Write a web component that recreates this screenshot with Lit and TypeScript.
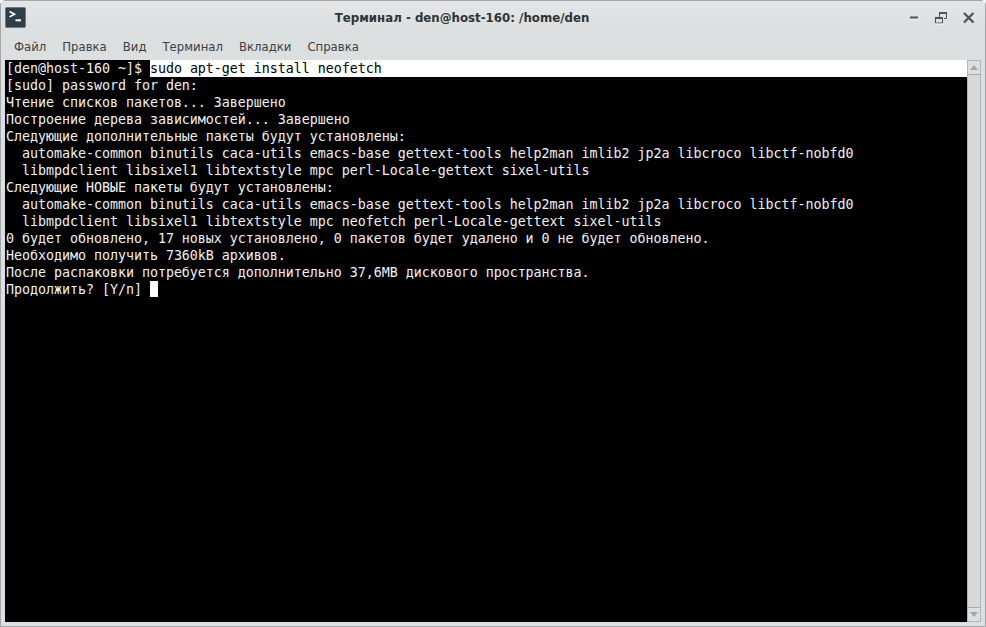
import { LitElement, html, css } from "lit";
import { customElement } from "lit/decorators.js";

const lines = [
  "[sudo] password for den:",
  "Чтение списков пакетов... Завершено",
  "Построение дерева зависимостей... Завершено",
  "Следующие дополнительные пакеты будут установлены:",
  "  automake-common binutils caca-utils emacs-base gettext-tools help2man imlib2 jp2a libcroco libctf-nobfd0",
  "  libmpdclient libsixel1 libtextstyle mpc perl-Locale-gettext sixel-utils",
  "Следующие НОВЫЕ пакеты будут установлены:",
  "  automake-common binutils caca-utils emacs-base gettext-tools help2man imlib2 jp2a libcroco libctf-nobfd0",
  "  libmpdclient libsixel1 libtextstyle mpc neofetch perl-Locale-gettext sixel-utils",
  "0 будет обновлено, 17 новых установлено, 0 пакетов будет удалено и 0 не будет обновлено.",
  "Необходимо получить 7360kB архивов.",
  "После распаковки потребуется дополнительно 37,6MB дискового пространства.",
];
const menu = ["Файл", "Правка", "Вид", "Терминал", "Вкладки", "Справка"];

@customElement("app-root")
export class AppRoot extends LitElement {
  static styles = css`
    :host { display: block; width: 986px; height: 627px; overflow: hidden; }
    .win {
      box-sizing: border-box; width: 986px; height: 627px; display: flex; flex-direction: column;
      background: #dcdfe0; border: 1px solid #a3a5a6; border-radius: 5px 5px 0 0;
      font-family: "DejaVu Sans", sans-serif; color: #2e3436;
    }
    .title {
      height: 34px; display: grid; grid-template-columns: 40px 1fr 100px; align-items: center;
      background: linear-gradient(#e3e5e6, #dbdedf);
    }
    .appicon { margin: 0 0 2px 4px; width: 21px; height: 21px; display: block; }
    .caption { text-align: center; font-size: 11.8px; font-weight: bold; padding-right: 2px; }
    .btns { display: flex; align-items: center; justify-content: flex-end; gap: 11px; padding-right: 8px; }
    .btns svg { display: block; width: 16px; height: 16px; }
    .menu { height: 25px; display: flex; padding-left: 13px; gap: 16px; align-items: center; font-size: 11.7px; color: #3c4043; padding-bottom: 1px; box-sizing: border-box; }
    .body { flex: 1; display: flex; padding: 0 4px 4px 4px; min-height: 0; }
    .term {
      flex: 1; background: #000; color: #f2f2f2; overflow: hidden;
      font-family: "DejaVu Sans Mono", monospace; font-size: 13.33px; letter-spacing: -0.03px; line-height: 17px;
      padding-left: 1px;
    }
    .line { height: 17px; white-space: pre; }
    .hl { background: #fff; color: #000; display: inline-block; width: 817px; height: 17px; }
    .cur { display: inline-block; width: 8px; height: 16px; background: #fff; vertical-align: top; }
    .sb { box-sizing: border-box; width: 14px; display: flex; flex-direction: column; background: #d6d9da; border: 1px solid #b4b7b8; }
    .arrow { height: 13px; background: #dcdfe0; display: flex; align-items: center; justify-content: center; flex: none; }
    .arrow.up { border-bottom: 1px solid #a8abac; }
    .arrow.down { border-top: 1px solid #a8abac; }
    .arrow svg { width: 8px; height: 5px; display: block; }
    .track { flex: 1; background: #d6d9da; }
  `;

  render() {
    return html`<div class="win">
      <div class="title">
        <svg class="appicon" viewBox="0 0 21 21">
          <rect x="0.5" y="0.5" width="20" height="20" rx="1" fill="#2f3f49" stroke="#6d7a82"/>
          <path d="M4.5 4.5 L9.5 7.2 L4.5 9.9" fill="none" stroke="#fff" stroke-width="1.6"/>
          <rect x="10.5" y="12.3" width="5.5" height="2" fill="#fff"/>
        </svg>
        <div class="caption">Терминал - den@host-160: /home/den</div>
        <div class="btns">
          <svg viewBox="0 0 16 16"><rect x="3" y="7" width="8" height="2.4" fill="#fff" opacity=".7"/><rect x="3" y="6.5" width="8" height="2" fill="#4b5154"/></svg>
          <svg viewBox="0 0 16 16">
            <path d="M5.5 7V2.5H12.5V8.5H10" fill="none" stroke="#4b5154" stroke-width="1"/>
            <rect x="5" y="2" width="8" height="2" fill="#4b5154"/>
            <rect x="1.5" y="7.5" width="7" height="5.5" fill="none" stroke="#4b5154"/>
            <rect x="1" y="7" width="8" height="2" fill="#4b5154"/>
            <rect x="1" y="13.5" width="8" height="1" fill="#fff" opacity=".8"/>
          </svg>
          <svg viewBox="0 0 16 16"><path d="M3 3L12.5 12.5M12.5 3L3 12.5" stroke="#4b5154" stroke-width="2.2"/></svg>
        </div>
      </div>
      <div class="menu">${menu.map((m) => html`<span>${m}</span>`)}</div>
      <div class="body">
        <div class="term">
          <div class="line">[den@host-160 ~]$ <span class="hl">sudo apt-get install neofetch</span></div>
          ${lines.map((l) => html`<div class="line">${l}</div>`)}
          <div class="line">Продолжить? [Y/n] <span class="cur"></span></div>
        </div>
        <div class="sb">
          <div class="arrow up"><svg viewBox="0 0 8 5"><path d="M4 0L8 5H0Z" fill="#a2a5a6"/></svg></div>
          <div class="track"></div>
          <div class="arrow down"><svg viewBox="0 0 8 5"><path d="M4 5L8 0H0Z" fill="#a2a5a6"/></svg></div>
        </div>
      </div>
    </div>`;
  }
}
